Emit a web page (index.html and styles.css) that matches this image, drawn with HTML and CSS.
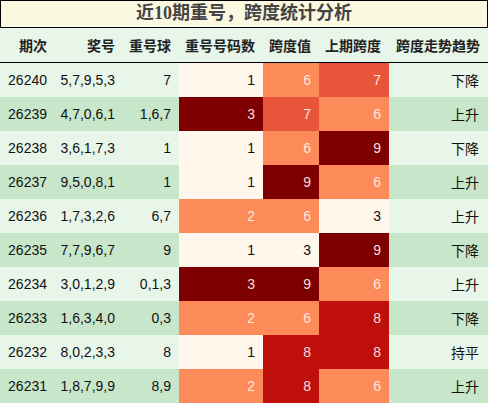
FILE: index.html
```html
<!DOCTYPE html>
<html lang="zh">
<head>
<meta charset="utf-8">
<link rel="stylesheet" href="styles.css">
</head>
<body>
<div class="title">近10期重号，跨度统计分析</div>
<table class="grid">
  <colgroup>
    <col class="c1"><col class="c2"><col class="c3"><col class="c4"><col class="c5"><col class="c6"><col class="c7">
  </colgroup>
  <thead>
    <tr><th>期次</th><th>奖号</th><th>重号球</th><th>重号号码数</th><th>跨度值</th><th>上期跨度</th><th>跨度走势趋势</th></tr>
  </thead>
  <tbody>
    <tr class="odd"><td>26240</td><td>5,7,9,5,3</td><td>7</td><td class="h0">1</td><td class="h2">6</td><td class="h3">7</td><td class="cn">下降</td></tr>
    <tr class="even"><td>26239</td><td>4,7,0,6,1</td><td>1,6,7</td><td class="h5">3</td><td class="h3">7</td><td class="h2">6</td><td class="cn">上升</td></tr>
    <tr class="odd"><td>26238</td><td>3,6,1,7,3</td><td>1</td><td class="h0">1</td><td class="h2">6</td><td class="h5">9</td><td class="cn">下降</td></tr>
    <tr class="even"><td>26237</td><td>9,5,0,8,1</td><td>1</td><td class="h0">1</td><td class="h5">9</td><td class="h2">6</td><td class="cn">上升</td></tr>
    <tr class="odd"><td>26236</td><td>1,7,3,2,6</td><td>6,7</td><td class="h2">2</td><td class="h2">6</td><td class="h0">3</td><td class="cn">上升</td></tr>
    <tr class="even"><td>26235</td><td>7,7,9,6,7</td><td>9</td><td class="h0">1</td><td class="h0">3</td><td class="h5">9</td><td class="cn">下降</td></tr>
    <tr class="odd"><td>26234</td><td>3,0,1,2,9</td><td>0,1,3</td><td class="h5">3</td><td class="h5">9</td><td class="h2">6</td><td class="cn">上升</td></tr>
    <tr class="even"><td>26233</td><td>1,6,3,4,0</td><td>0,3</td><td class="h2">2</td><td class="h2">6</td><td class="h4">8</td><td class="cn">下降</td></tr>
    <tr class="odd"><td>26232</td><td>8,0,2,3,3</td><td>8</td><td class="h0">1</td><td class="h4">8</td><td class="h4">8</td><td class="cn">持平</td></tr>
    <tr class="even"><td>26231</td><td>1,8,7,9,9</td><td>8,9</td><td class="h2">2</td><td class="h4">8</td><td class="h2">6</td><td class="cn">上升</td></tr>
  </tbody>
</table>
</body>
</html>
```
FILE: styles.css
```css
html, body {
  margin: 0;
  padding: 0;
  background: #ffffff;
}
body {
  width: 488px;
  font-family: "Liberation Sans", "Noto Sans CJK SC", sans-serif;
}
.title {
  box-sizing: border-box;
  height: 28px;
  border: 1px solid #000;
  background: #faf8e0;
  color: #444444;
  font-family: "Liberation Serif", "Noto Sans CJK SC", serif;
  font-weight: bold;
  font-size: 18px;
  line-height: 25px;
  text-align: center;
}
.grid {
  width: 488px;
  border-collapse: collapse;
  table-layout: fixed;
  font-size: 14px;
}
.c1 { width: 55px; }
.c2 { width: 68px; }
.c3 { width: 56px; }
.c4 { width: 84px; }
.c5 { width: 56px; }
.c6 { width: 70px; }
.c7 { width: 99px; }
.grid th {
  height: 34px;
  padding: 0 8px 0 0;
  background: #e8f5e9;
  color: #222222;
  font-family: "Noto Sans CJK SC", sans-serif;
  font-weight: bold;
  font-size: 14px;
  text-align: right;
  border-bottom: 1px solid #000;
  white-space: nowrap;
}
.grid td {
  height: 34px;
  padding: 0 8px 0 0;
  text-align: right;
  color: #111111;
  white-space: nowrap;
}
.grid td.cn {
  font-family: "Noto Sans CJK SC", sans-serif;
  padding-right: 9px;
}
.odd td { background: #e8f5e9; }
.even td { background: #c8e6c9; }
.grid td.h0 { background: #fff6ec; color: #111111; }
.grid td.h2 { background: #fc8b59; color: #fde9d9; }
.grid td.h3 { background: #e9553b; color: #fde9d9; }
.grid td.h4 { background: #be0f0b; color: #f7dcdc; }
.grid td.h5 { background: #7f0000; color: #f2dede; }
```
